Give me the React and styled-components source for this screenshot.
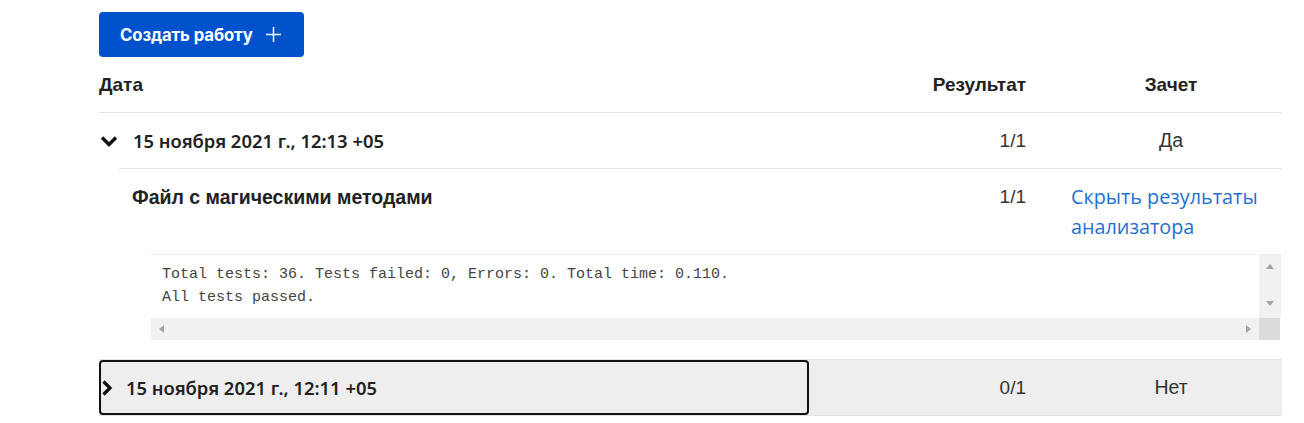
import React from 'react';
import styled, { createGlobalStyle } from 'styled-components';

const GlobalStyle = createGlobalStyle`
    body {
        margin: 0;
        background: #fff;
        color: #222;
        font-family: "Liberation Sans", Arial, sans-serif;
    }
`;

const Page = styled.div`
    width: 1183px;
    padding: 12px 0 0 99px;
`;

const CreateButton = styled.button`
    display: flex;
    align-items: center;
    gap: 12px;
    height: 45px;
    padding: 0 22px 0 21px;
    border: none;
    border-radius: 4px;
    background: #0052cc;
    color: #fff;
    font-family: Inter, sans-serif;
    font-size: 16.7px;
    font-weight: 700;
    letter-spacing: -0.1px;
    cursor: pointer;
`;

const Row = styled.div`
    display: grid;
    grid-template-columns: 710px 251px 222px;
    align-items: center;
    height: ${p => p.$height || 'auto'};
    border-top: ${p => (p.$topBorder ? '1px solid #e2e2e2' : 'none')};
    border-bottom: ${p => (p.$noBorder ? 'none' : '1px solid #e2e2e2')};
    background: ${p => p.$bg || 'transparent'};
`;

const HeadCell = styled.div`
    font-family: "Liberation Sans", Arial, sans-serif;
    font-weight: 700;
    font-size: 19px;
    color: #222;
    text-align: ${p => p.$align || 'left'};
    padding-right: ${p => (p.$align === 'right' ? '34px' : '0')};
`;

const DateCell = styled.div`
    display: flex;
    align-items: center;
    align-self: stretch;
    gap: ${p => p.$gap || '15px'};
    padding-left: 1px;
    font-family: "Noto Sans", sans-serif;
    font-weight: 600;
    font-size: 18.4px;
    color: #222;
    border: ${p => (p.$focused ? '2px solid #111' : 'none')};
    border-radius: 4px;
    box-sizing: border-box;
`;

const ScoreCell = styled.div`
    text-align: right;
    padding-right: 34px;
    font-family: "Liberation Sans", Arial, sans-serif;
    font-size: 19px;
    color: #333;
`;

const CreditCell = styled.div`
    text-align: center;
    font-family: "Liberation Sans", Arial, sans-serif;
    font-size: 19.5px;
    color: #333;
`;

const Detail = styled.div`
    margin-left: 20px;
    border-top: 1px solid #e2e2e2;
`;

const DetailRow = styled.div`
    display: grid;
    grid-template-columns: 690px 251px 222px;
    align-items: start;
    padding-top: 13px;
    line-height: 30px;
`;

const FileName = styled.div`
    padding-left: 13px;
    font-family: "Liberation Sans", Arial, sans-serif;
    font-weight: 700;
    font-size: 19.5px;
    color: #222;
`;

const AnalyzerLink = styled.a`
    padding-left: 11px;
    font-family: "Open Sans", sans-serif;
    font-size: 19.8px;
    color: #1f6fd1;
    text-decoration: none;
    cursor: pointer;
`;

const Output = styled.div`
    display: grid;
    grid-template-columns: 1fr 22px;
    grid-template-rows: 63px 22px;
    margin: 12px 0 19px 52px;
    width: 1130px;
    border-top: 1px solid #eeeeee;
`;

const Log = styled.pre`
    margin: 0;
    padding: 8px 11px;
    font-family: "Liberation Mono", "Courier New", monospace;
    font-size: 15px;
    line-height: 23px;
    color: #444;
    overflow: hidden;
`;

const ScrollTrack = styled.div`
    display: flex;
    flex-direction: ${p => (p.$vertical ? 'column' : 'row')};
    justify-content: space-between;
    align-items: center;
    padding: ${p => (p.$vertical ? '9px 0 12px' : '0 8px')};
    background: #f1f1f1;
`;

const ScrollCorner = styled.div`
    background: #dcdcdc;
    border-right: 1px solid #fff;
`;

const Arrow = ({ dir }) => {
    const shapes = {
        up: '0,5 4,0 8,5',
        down: '0,0 8,0 4,5',
        left: '5,0 5,8 0,4',
        right: '0,0 5,4 0,8',
    };
    const wide = dir === 'up' || dir === 'down';
    return (
        <svg width={wide ? 8 : 5} height={wide ? 5 : 8} viewBox={wide ? '0 0 8 5' : '0 0 5 8'}>
            <polygon points={shapes[dir]} fill="#a3a3a3" />
        </svg>
    );
};

const PlusIcon = () => (
    <svg width="17" height="17" viewBox="0 0 17 17" fill="none">
        <path d="M8.5 1v15M1 8.5h15" stroke="#fff" strokeWidth="1.5" />
    </svg>
);

const ChevronDown = () => (
    <svg width="18" height="12" viewBox="0 0 18 12" fill="none">
        <path d="M2 2.5l7 7 7-7" stroke="#111" strokeWidth="3.4" />
    </svg>
);

const ChevronRight = () => (
    <svg width="11" height="16" viewBox="0 0 11 16" fill="none">
        <path d="M1.5 1.5l6.5 6.5-6.5 6.5" stroke="#111" strokeWidth="3.2" />
    </svg>
);

const App = () => {
    return (
        <>
            <GlobalStyle />
            <Page>
                <CreateButton>
                    Создать работу <PlusIcon />
                </CreateButton>
                <Row $height="55px">
                    <HeadCell>Дата</HeadCell>
                    <HeadCell $align="right">Результат</HeadCell>
                    <HeadCell $align="center">Зачет</HeadCell>
                </Row>
                <Row $height="55px" $noBorder>
                    <DateCell>
                        <ChevronDown />
                        15 ноября 2021 г., 12:13 +05
                    </DateCell>
                    <ScoreCell>1/1</ScoreCell>
                    <CreditCell>Да</CreditCell>
                </Row>
                <Detail>
                    <DetailRow>
                        <FileName>Файл с магическими методами</FileName>
                        <ScoreCell>1/1</ScoreCell>
                        <AnalyzerLink>Скрыть результаты анализатора</AnalyzerLink>
                    </DetailRow>
                </Detail>
                <Output>
                    <Log>{'Total tests: 36. Tests failed: 0, Errors: 0. Total time: 0.110.\nAll tests passed.'}</Log>
                    <ScrollTrack $vertical>
                        <Arrow dir="up" />
                        <Arrow dir="down" />
                    </ScrollTrack>
                    <ScrollTrack>
                        <Arrow dir="left" />
                        <Arrow dir="right" />
                    </ScrollTrack>
                    <ScrollCorner />
                </Output>
                <Row $height="55px" $bg="#eeeeee" $topBorder>
                    <DateCell $focused $gap="13px">
                        <ChevronRight />
                        15 ноября 2021 г., 12:11 +05
                    </DateCell>
                    <ScoreCell>0/1</ScoreCell>
                    <CreditCell>Нет</CreditCell>
                </Row>
            </Page>
        </>
    );
};

export default App;
